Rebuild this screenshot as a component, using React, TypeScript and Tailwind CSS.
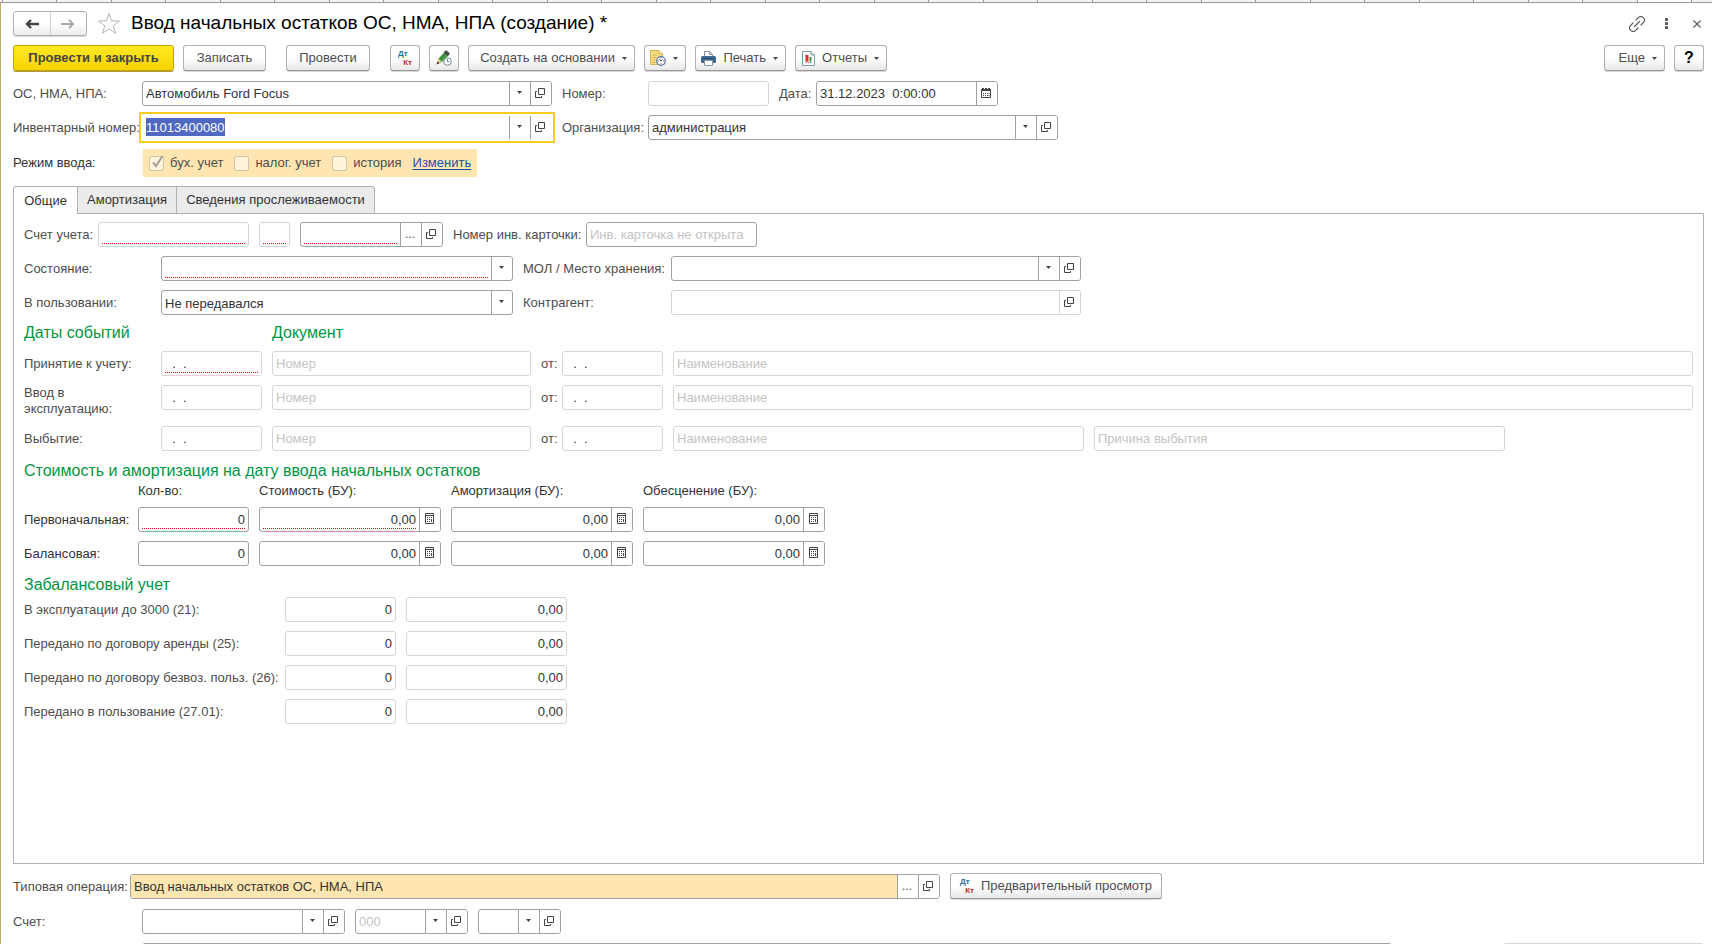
import clsx from "clsx";
import { ReactNode, useEffect, useRef } from "react";

const BOX = "flex h-[25px] border bg-white overflow-hidden";

type FieldButton = "drop" | "open" | "dots" | "calendar" | "calc";

function DropArrow() {
    return (
        <svg width="5" height="3" viewBox="0 0 5 3" className="shrink-0" fill="#444">
            <path d="M0 0H5L2.5 3Z" />
        </svg>
    )
}

function OpenIcon() {
    return (
        <svg width="10" height="10" viewBox="0 0 10 10" fill="none" stroke="#444">
            <path d="M3.5 .5H9.5V6.5H3.5ZM2 3.5H.5V9.5H6.5V8" />
        </svg>
    )
}

function CalendarIcon() {
    return (
        <svg width="10" height="10" viewBox="0 0 10 10">
            <path d="M0 1H1V0H3V1H4V0H6V1H7V0H9V1H10V3H0Z" fill="#444" />
            <path d="M.5 3V9.5H9.5V3" fill="none" stroke="#444" />
            <path d="M2 5h1v1H2zM4 5h1v1H4zM6 5h1v1H6zM2 7h1v1H2zM4 7h1v1H4zM6 7h1v1H6zM7.5 5h1v1h-1zM7.5 7h1v1h-1z" fill="#444" />
        </svg>
    )
}

function CalcIcon() {
    return (
        <svg width="9" height="11" viewBox="0 0 9 11">
            <path d="M.5 .5H8.5V10.5H.5Z" fill="none" stroke="#444" />
            <path d="M1 2h7v1H1zM2 4h1v1H2zM4 4h1v1H4zM6 4h1v1H6zM2 6h1v1H2zM4 6h1v1H4zM6 6h1v3H6zM2 8h1v1H2zM4 8h1v1H4z" fill="#444" />
        </svg>
    )
}

const buttonIcons: Record<FieldButton, ReactNode> = {
    drop: <DropArrow />,
    open: <OpenIcon />,
    dots: '...',
    calendar: <CalendarIcon />,
    calc: <CalcIcon />
}

const buttonTitles: Record<FieldButton, string> = {
    drop: 'Выбрать из списка',
    open: 'Открыть',
    dots: 'Выбрать',
    calendar: 'Календарь',
    calc: 'Калькулятор'
}

interface FieldProps {
    id: string
    className?: string
    label?: string
    value?: string
    placeholder?: string
    buttons?: FieldButton[]
    required?: boolean
    muted?: boolean
    number?: boolean
    active?: boolean
    filled?: boolean
}

function Field({ id, className, label, value, placeholder, buttons = [], required, muted, number, active, filled }: FieldProps) {
    const inputRef = useRef<HTMLInputElement>(null)

    useEffect(() => {
        if(active) {
            inputRef.current?.focus()
            inputRef.current?.select()
        }
    }, [active])

    return (
        <div
            className={clsx(
                BOX,
                active ? 'border-white outline-2 outline-offset-1 outline-[#f9cb20]' : 'rounded-[3px]',
                !active && (muted ? 'border-[#d6d6d6]' : 'border-[#a0a0a0]'),
                className
            )}
        >
            <div className={clsx('flex min-w-0 flex-1 px-[3px] pb-[2px]', filled && 'bg-[#ffe6b0]')}>
                <input
                    ref={inputRef}
                    id={id}
                    aria-label={label}
                    defaultValue={value}
                    placeholder={placeholder}
                    readOnly={muted}
                    className={clsx(
                        'w-full min-w-0 border-b border-dotted bg-transparent pt-[3px] text-[13px] text-[#333] outline-none placeholder:text-[#c4c4c4]',
                        'selection:bg-[#4f69c3] selection:text-white',
                        required ? 'border-[#e00000]' : 'border-transparent',
                        number && 'text-right'
                    )}
                />
            </div>
            {buttons.map(button => (
                <button
                    key={button}
                    type="button"
                    title={buttonTitles[button]}
                    className={clsx(
                        'flex w-[21px] shrink-0 items-center justify-center border-l bg-white pr-[2px] pb-[2px] text-xs text-[#444]',
                        muted ? 'border-[#d6d6d6]' : 'border-[#a0a0a0]'
                    )}
                >
                    {buttonIcons[button]}
                </button>
            ))}
        </div>
    )
}

function SelectField({ id, className, value, required }: { id: string, className?: string, value: string, required?: boolean }) {
    return (
        <div className={clsx(BOX, 'rounded-[3px] border-[#a0a0a0]', className)}>
            <div className="flex flex-1 px-[3px] pb-[2px]">
                <select
                    id={id}
                    defaultValue={value}
                    className={clsx(
                        'w-full appearance-none border-b border-dotted bg-transparent pt-[3px] text-[13px] text-[#333] outline-none',
                        required ? 'border-[#e00000]' : 'border-transparent'
                    )}
                >
                    <option value={value}>{value}</option>
                </select>
            </div>
            <span className="flex w-[21px] items-center justify-center border-l border-[#a0a0a0] pr-[2px] pb-[2px]">
                <DropArrow />
            </span>
        </div>
    )
}

function Label({ htmlFor, className, children }: { htmlFor: string, className?: string, children: ReactNode }) {
    return <label htmlFor={htmlFor} className={clsx('shrink-0 whitespace-nowrap', className)}>{children}</label>
}

function ToolButton({ className, title, drop, children }: { className?: string, title?: string, drop?: boolean, children: ReactNode }) {
    return (
        <button
            type="button"
            title={title}
            className={clsx(
                'flex h-[26px] shrink-0 items-center gap-[7px] whitespace-nowrap rounded-[3px] border border-[#b0b0b0] border-b-[#989898] bg-linear-to-b from-white from-50% to-[#e8e8e8] shadow-[0_1px_0_#d8d8d8]',
                drop ? 'justify-end pr-[7px]' : 'justify-center',
                className
            )}
        >
            {children}
            {drop && <DropArrow />}
        </button>
    )
}

function DtKtIcon() {
    return (
        <span className="flex w-[14px] flex-col text-[8px] leading-[9px] font-bold">
            <span className="self-start text-[#2c6f9f]">Дт</span>
            <span className="self-end text-[#c22a1a]">Кт</span>
        </span>
    )
}

function PencilIcon() {
    return (
        <svg width="16" height="16" viewBox="0 0 16 16">
            <path d="M1 14L2.5 8.5L7.5 3L11.5 6.5L6 12Z" fill="#4aa544" />
            <path d="M3.8 9.8L9 4.3" stroke="#2c8030" strokeWidth="1.2" />
            <path d="M7.5 3L9 .8Q10 0 11 .8L13.2 2.8Q14 3.8 13.2 4.8L11.5 6.5Z" fill="#454f49" />
            <path d="M1 14L2.5 8.5L6 12Z" fill="#efc08a" />
            <path d="M.5 14.5L1.4 11.5L3.5 13.3Z" fill="#333" />
            <circle cx="11.5" cy="11.5" r="3.8" fill="#fff" stroke="#71879b" />
            <path d="M11.5 9V11.7H13.5" fill="none" stroke="#71879b" />
        </svg>
    )
}

function ScheduleIcon() {
    return (
        <svg width="16" height="16" viewBox="0 0 16 16">
            <path d="M.5 .5H9L12.5 4V14.5H.5Z" fill="#f6dc84" stroke="#d3b050" />
            <path d="M9 .5V4H12.5" fill="#fff2bd" stroke="#d3b050" />
            <path d="M2.5 5H7M2.5 7.5H6M2.5 10H5M2.5 12.5H5" stroke="#d3b050" />
            <circle cx="11" cy="11" r="4.3" fill="#fff" stroke="#4f7cac" strokeWidth="1.2" />
            <path d="M11 7.5V8.7M11 13.3V14.5M7.5 11H8.7M13.3 11H14.5" stroke="#d33" />
            <path d="M11 11L9.5 9.3M11 11L12.5 10" stroke="#345" />
        </svg>
    )
}

function PrinterIcon() {
    return (
        <svg width="15" height="15" viewBox="0 0 15 15">
            <path d="M3.5 6V.5H8.5L11.5 3.5V6" fill="#fff" stroke="#8596a6" />
            <path d="M8.5 .5V3.5H11.5" fill="none" stroke="#8596a6" />
            <rect y="5" width="15" height="7" rx="1.5" fill="#3d6894" />
            <path d="M1.5 7.5H13.5" stroke="#244868" />
            <path d="M3.5 9.5H11.5V14.5H3.5Z" fill="#fff" stroke="#8596a6" />
        </svg>
    )
}

function ReportIcon() {
    return (
        <svg width="13" height="15" viewBox="0 0 13 15">
            <path d="M.5 .5H9L12.5 4V14.5H.5Z" fill="#fff" stroke="#8596a6" />
            <path d="M9 .5V4H12.5" fill="none" stroke="#8596a6" />
            <path d="M3.5 3V11.5H10" fill="none" stroke="#a0acb8" />
            <path d="M4 4H6.5V10.5H4Z" fill="#e52b20" />
            <path d="M7.5 6H9.5V10.5H7.5Z" fill="#37953a" />
        </svg>
    )
}

function ModeCheck({ id, children, checked }: { id: string, children: ReactNode, checked?: boolean }) {
    return (
        <label htmlFor={id} className="flex items-center gap-[6px]">
            <span className="relative flex">
                <input
                    id={id}
                    type="checkbox"
                    defaultChecked={checked}
                    disabled
                    className="size-[15px] appearance-none rounded-[2px] border border-[#cfc4ae] bg-[#fff3da]"
                />
                {checked && (
                    <svg className="absolute -top-px left-[2px]" width="13" height="14" viewBox="0 0 13 14" fill="none" stroke="#a5a093" strokeWidth="2">
                        <path d="M2 7.5L5 11L11.5 1" />
                    </svg>
                )}
            </span>
            {children}
        </label>
    )
}

const eventRows = [
    { id: 'accept', label: 'Принятие к учету:', required: true },
    { id: 'start', label: 'Ввод в эксплуатацию:' },
    { id: 'disposal', label: 'Выбытие:', reason: true }
]

const costRows = [
    { id: 'initial', label: 'Первоначальная:', required: true },
    { id: 'balance', label: 'Балансовая:' }
]

const offBalanceRows = [
    { id: 'off21', label: 'В эксплуатации до 3000 (21):' },
    { id: 'off25', label: 'Передано по договору аренды (25):' },
    { id: 'off26', label: 'Передано по договору безвоз. польз. (26):' },
    { id: 'off27', label: 'Передано в пользование (27.01):' }
]

function WindowStrip() {
    return (
        <div className="flex h-[3px] shrink-0 border-b border-[#999] bg-[#f2f2f2]">
            <div className="w-[2px]" />
            {Array.from({ length: 31 }, (_, i) => (
                <div key={i} className={clsx('flex-1 border-l border-[#999]', i === 30 && 'bg-white')} />
            ))}
            <div className="w-[21px] border-l border-[#999]" />
        </div>
    )
}

function TitleBar() {
    return (
        <header className="flex h-[25px] items-center">
            <div className="flex h-[25px] w-[74px] rounded-[3px] border border-[#b0b0b0] bg-linear-to-b from-white from-50% to-[#ececec] shadow-[0_1px_0_#d8d8d8]">
                <button type="button" title="Назад" className="flex flex-1 items-center justify-center border-r border-[#d0d0d0]">
                    <svg width="14" height="10" viewBox="0 0 14 10" fill="none" stroke="#444" strokeWidth="2.4">
                        <path d="M14 5H3M6 1L2 5L6 9" />
                    </svg>
                </button>
                <button type="button" title="Вперед" className="flex flex-1 items-center justify-center">
                    <svg width="14" height="10" viewBox="0 0 14 10" fill="none" stroke="#a8a8a8" strokeWidth="2">
                        <path d="M0 5H12M8 1L12 5L8 9" />
                    </svg>
                </button>
            </div>
            <button type="button" title="В избранное" className="ml-[10px]">
                <svg width="24" height="23" viewBox="0 0 24 23" fill="#fff" stroke="#adb6be">
                    <path d="M12 1.5L14.6 8.8L22.5 9L16.3 13.8L18.5 21.3L12 16.9L5.5 21.3L7.7 13.8L1.5 9L9.4 8.8Z" />
                </svg>
            </button>
            <h1 className="ml-[10px] pb-px text-[19px] leading-6 text-black">Ввод начальных остатков ОС, НМА, НПА (создание) *</h1>
            <div className="ml-auto flex items-center pr-[3px]">
                <button type="button" title="Ссылка">
                    <svg width="16" height="16" viewBox="0 0 16 16" fill="none" stroke="#555" strokeWidth="1.1" strokeLinecap="round">
                        <path d="M7 4L9.3 1.7A3.3 3.3 0 0 1 14.3 6.7L12 9M9 12L6.7 14.3A3.3 3.3 0 0 1 1.7 9.3L4 7M5.5 10.5L10.5 5.5" />
                    </svg>
                </button>
                <button type="button" title="Меню" className="ml-5">
                    <svg width="3" height="11" viewBox="0 0 3 11" fill="#5c5c5c">
                        <rect width="3" height="3" rx=".6" />
                        <rect y="4" width="3" height="3" rx=".6" />
                        <rect y="8" width="3" height="3" rx=".6" />
                    </svg>
                </button>
                <button type="button" title="Закрыть" className="ml-[25px]">
                    <svg width="8" height="8" viewBox="0 0 8 8" stroke="#555" strokeWidth="1.1">
                        <path d="M.5 .5L7.5 7.5M7.5 .5L.5 7.5" />
                    </svg>
                </button>
            </div>
        </header>
    )
}

function Toolbar() {
    return (
        <div className="mt-[9px] flex items-center gap-[9px]">
            <button
                type="button"
                className="h-[26px] w-[161px] rounded-[3px] border border-[#c4a400] bg-linear-to-b from-[#ffe920] to-[#f7d300] font-bold text-[#444] shadow-[0_1px_0_#a89848]"
            >
                Провести и закрыть
            </button>
            <ToolButton className="w-[83px]">Записать</ToolButton>
            <ToolButton className="ml-[11px] w-[84px]">Провести</ToolButton>
            <ToolButton className="ml-[11px] w-[30px]" title="Проводки"><DtKtIcon /></ToolButton>
            <ToolButton className="w-[30px]" title="История изменений"><PencilIcon /></ToolButton>
            <ToolButton className="w-[167px]" drop>Создать на основании</ToolButton>
            <ToolButton className="w-[42px]" title="Напоминание" drop><ScheduleIcon /></ToolButton>
            <ToolButton className="w-[91px]" drop><PrinterIcon />Печать</ToolButton>
            <ToolButton className="w-[92px]" drop><ReportIcon />Отчеты</ToolButton>
            <ToolButton className="ml-auto w-[61px]" drop>Еще</ToolButton>
            <ToolButton className="w-[30px] text-base font-bold text-black" title="Справка">?</ToolButton>
        </div>
    )
}

function HeadFields() {
    return (
        <div className="mt-[10px] flex flex-col gap-[9px]">
            <div className="flex items-center">
                <Label htmlFor="asset" className="w-[129px]">ОС, НМА, НПА:</Label>
                <Field id="asset" className="w-[410px]" value="Автомобиль Ford Focus" buttons={['drop', 'open']} />
                <Label htmlFor="number" className="ml-[10px] w-[86px]">Номер:</Label>
                <Field id="number" className="w-[121px]" muted />
                <Label htmlFor="date" className="ml-[10px] w-[37px]">Дата:</Label>
                <Field id="date" className="w-[182px]" value="31.12.2023  0:00:00" buttons={['calendar']} />
            </div>
            <div className="flex items-center">
                <Label htmlFor="inventory" className="w-[129px]">Инвентарный номер:</Label>
                <Field id="inventory" className="w-[410px]" value="11013400080" buttons={['drop', 'open']} active />
                <Label htmlFor="organization" className="ml-[10px] w-[86px]">Организация:</Label>
                <Field id="organization" className="w-[410px]" value="администрация" buttons={['drop', 'open']} />
            </div>
            <div className="flex items-center">
                <span className="w-[130px] text-[#333]">Режим ввода:</span>
                <div className="flex h-[28px] items-center gap-[11px] bg-[#ffe6b0] px-[6px]">
                    <ModeCheck id="accounting" checked>бух. учет</ModeCheck>
                    <ModeCheck id="tax">налог. учет</ModeCheck>
                    <ModeCheck id="history">история</ModeCheck>
                    <a href="#mode" className="text-[#1c4fa8] underline underline-offset-2">Изменить</a>
                </div>
            </div>
        </div>
    )
}

function Tabs() {
    return (
        <div role="tablist" className="relative z-10 mt-[9px] -mb-px flex h-[28px] text-[#333]">
            <button type="button" role="tab" aria-selected="true" className="w-[65px] rounded-tl-[3px] border border-b-0 border-[#b0b0b0] bg-white">
                Общие
            </button>
            <button type="button" role="tab" aria-selected="false" className="w-[99px] border border-l-0 border-[#b0b0b0] bg-[#ebebeb]">
                Амортизация
            </button>
            <button type="button" role="tab" aria-selected="false" className="w-[198px] rounded-tr-[3px] border border-l-0 border-[#b0b0b0] bg-[#ebebeb]">
                Сведения прослеживаемости
            </button>
        </div>
    )
}

function GeneralTab() {
    return (
        <section className="min-h-[651px] shrink-0 border border-[#b0b0b0] px-[10px] pt-2">
            <div className="flex flex-col gap-[9px]">
                <div className="flex items-center">
                    <Label htmlFor="account" className="w-[74px]">Счет учета:</Label>
                    <Field id="account" className="w-[151px]" required muted />
                    <Field id="account-kind" label="Вид" className="ml-[10px] w-[31px]" required muted />
                    <Field id="account-code" label="Код счета" className="ml-[10px] w-[143px]" buttons={['dots', 'open']} required />
                    <Label htmlFor="card" className="ml-[10px] w-[133px]">Номер инв. карточки:</Label>
                    <Field id="card" className="w-[171px]" placeholder="Инв. карточка не открыта" />
                </div>
                <div className="flex items-center">
                    <Label htmlFor="state" className="w-[137px]">Состояние:</Label>
                    <SelectField id="state" className="w-[352px]" value="" required />
                    <Label htmlFor="storage" className="ml-[10px] w-[148px]">МОЛ / Место хранения:</Label>
                    <Field id="storage" className="w-[410px]" buttons={['drop', 'open']} />
                </div>
                <div className="flex items-center">
                    <Label htmlFor="usage" className="w-[137px]">В пользовании:</Label>
                    <SelectField id="usage" className="w-[352px]" value="Не передавался" />
                    <Label htmlFor="partner" className="ml-[10px] w-[148px]">Контрагент:</Label>
                    <Field id="partner" className="w-[410px]" buttons={['open']} muted />
                </div>
            </div>

            <div className="my-[6px] flex text-base leading-6 text-[#009646]">
                <h2 className="w-[248px]">Даты событий</h2>
                <h2>Документ</h2>
            </div>
            <div className="flex flex-col gap-[9px]">
                {eventRows.map(row => (
                    <div key={row.id} className="flex items-start">
                        <label htmlFor={`${row.id}-date`} className="flex min-h-[25px] w-[137px] shrink-0 items-center pr-5 leading-4">
                            {row.label}
                        </label>
                        <Field id={`${row.id}-date`} className="w-[101px] shrink-0" value="  .  ." required={row.required} muted />
                        <Field id={`${row.id}-number`} label="Номер" className="ml-[10px] w-[259px] shrink-0" placeholder="Номер" muted />
                        <Label htmlFor={`${row.id}-from`} className="ml-[10px] w-[21px] leading-[25px]">от:</Label>
                        <Field id={`${row.id}-from`} className="w-[101px] shrink-0" value="  .  ." muted />
                        <Field
                            id={`${row.id}-name`}
                            label="Наименование"
                            className={clsx('ml-[10px]', row.reason ? 'w-[411px]' : 'flex-1')}
                            placeholder="Наименование"
                            muted
                        />
                        {row.reason && (
                            <Field id={`${row.id}-reason`} label="Причина выбытия" className="ml-[10px] w-[411px]" placeholder="Причина выбытия" muted />
                        )}
                    </div>
                ))}
            </div>

            <h2 className="mt-2 text-base leading-6 text-[#009646]">Стоимость и амортизация на дату ввода начальных остатков</h2>
            <div className="flex gap-[10px] leading-4 text-[#333]">
                <span className="ml-[114px] w-[111px]">Кол-во:</span>
                <span className="w-[182px]">Стоимость (БУ):</span>
                <span className="w-[182px]">Амортизация (БУ):</span>
                <span className="w-[182px]">Обесценение (БУ):</span>
            </div>
            <div className="mt-2 flex flex-col gap-[9px]">
                {costRows.map(row => (
                    <div key={row.id} className="flex items-center gap-[10px]">
                        <Label htmlFor={`${row.id}-count`} className="w-[104px] text-[#333]">{row.label}</Label>
                        <Field id={`${row.id}-count`} className="w-[111px]" value="0" required={row.required} number />
                        <Field id={`${row.id}-cost`} label="Стоимость (БУ)" className="w-[182px]" value="0,00" buttons={['calc']} required={row.required} number />
                        <Field id={`${row.id}-depreciation`} label="Амортизация (БУ)" className="w-[182px]" value="0,00" buttons={['calc']} number />
                        <Field id={`${row.id}-impairment`} label="Обесценение (БУ)" className="w-[182px]" value="0,00" buttons={['calc']} number />
                    </div>
                ))}
            </div>

            <h2 className="mt-[7px] text-base leading-6 text-[#009646]">Забалансовый учет</h2>
            <div className="flex flex-col gap-[9px]">
                {offBalanceRows.map(row => (
                    <div key={row.id} className="flex items-center">
                        <Label htmlFor={`${row.id}-count`} className="w-[261px]">{row.label}</Label>
                        <Field id={`${row.id}-count`} className="w-[111px]" value="0" number muted />
                        <Field id={`${row.id}-sum`} label="Сумма" className="ml-[10px] w-[161px]" value="0,00" number muted />
                    </div>
                ))}
            </div>
        </section>
    )
}

function FootFields() {
    return (
        <div className="mt-[9px] flex flex-col">
            <div className="flex items-end">
                <Label htmlFor="operation" className="w-[117px] leading-[25px]">Типовая операция:</Label>
                <Field id="operation" className="w-[810px]" value="Ввод начальных остатков ОС, НМА, НПА" buttons={['dots', 'open']} filled />
                <ToolButton className="ml-[10px] w-[212px]"><DtKtIcon />Предварительный просмотр</ToolButton>
            </div>
            <div className="mt-[10px] flex items-center">
                <Label htmlFor="bill" className="w-[129px]">Счет:</Label>
                <Field id="bill" className="w-[203px]" buttons={['drop', 'open']} />
                <Field id="bill-code" label="Код" className="ml-[10px] w-[113px]" placeholder="000" buttons={['drop', 'open']} />
                <Field id="bill-kind" label="Вид" className="ml-[10px] w-[83px]" buttons={['drop', 'open']} />
            </div>
            <div className="mt-[9px] flex items-center">
                <Field id="comment" label="Комментарий" className="ml-[129px] flex-1" />
                <Field id="author" label="Ответственный" className="ml-[111px] w-[201px]" muted />
            </div>
        </div>
    )
}

export default function App() {
    return (
        <div className="flex h-screen flex-col overflow-hidden bg-white font-['Liberation_Sans',Arial,sans-serif] text-[13px] text-[#4d4d4d]">
            <WindowStrip />
            <main className="flex flex-1 flex-col border-l border-[#c0ab62] pt-2 pr-2 pl-3">
                <TitleBar />
                <Toolbar />
                <HeadFields />
                <Tabs />
                <GeneralTab />
                <FootFields />
            </main>
        </div>
    )
}
